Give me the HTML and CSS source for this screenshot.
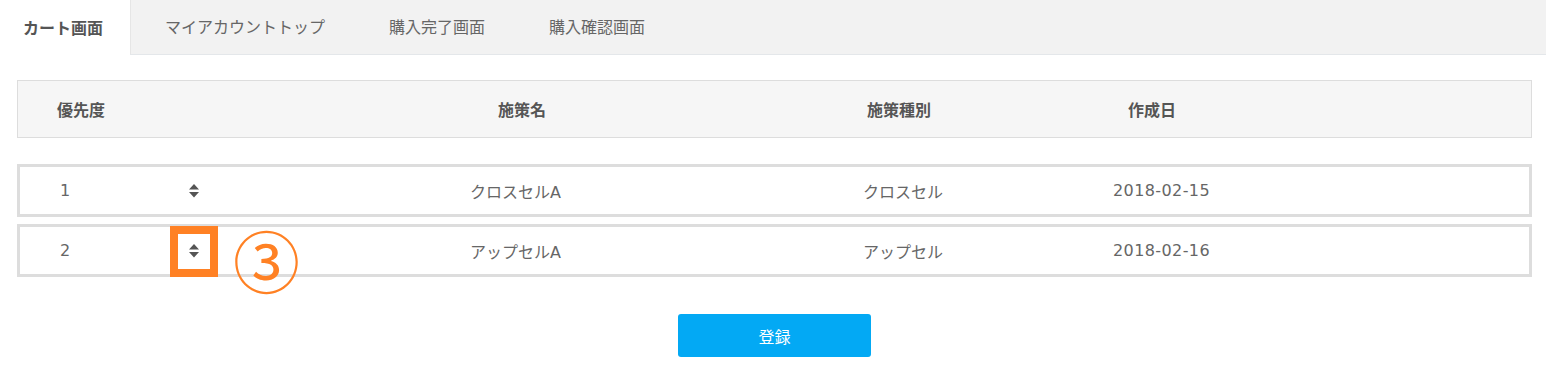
FILE: index.html
```html
<!DOCTYPE html>
<html lang="ja">
<head>
<meta charset="utf-8">
<title>カート画面</title>
<link rel="stylesheet" href="styles.css">
</head>
<body>
<nav class="tabs">
  <div class="tab active">カート画面</div>
  <div class="tab-rest">
    <div class="tab">マイアカウントトップ</div>
    <div class="tab">購入完了画面</div>
    <div class="tab">購入確認画面</div>
  </div>
</nav>
<main class="content">
  <div class="thead">
    <div>優先度</div>
    <div>施策名</div>
    <div>施策種別</div>
    <div>作成日</div>
  </div>
  <div class="rows">
    <div class="row">
      <div>1</div>
      <div class="sort"><svg width="10" height="14" viewBox="0 0 10 14"><path d="M5 0 L10 5.5 H0 Z M0 8 H10 L5 13.5 Z" fill="#555"/></svg></div>
      <div>クロスセルA</div>
      <div>クロスセル</div>
      <div class="date">2018-02-15</div>
    </div>
    <div class="row">
      <div>2</div>
      <div class="sort"><svg width="10" height="14" viewBox="0 0 10 14"><path d="M5 0 L10 5.5 H0 Z M0 8 H10 L5 13.5 Z" fill="#555"/></svg></div>
      <div>アップセルA</div>
      <div>アップセル</div>
      <div class="date">2018-02-16</div>
      <div class="mark-box"></div>
      <div class="mark-num">③</div>
    </div>
  </div>
  <div class="actions">
    <button class="btn">登録</button>
  </div>
</main>
</body>
</html>
```
FILE: styles.css
```css
body {
  margin: 0;
  font-family: "DejaVu Sans", "Noto Sans CJK JP", sans-serif;
  font-size: 16px;
  color: #666;
  background: #fff;
}
.tabs {
  display: flex;
  height: 54px;
  border-bottom: 1px solid #e4e7ea;
}
.tab {
  display: flex;
  align-items: center;
  padding: 0 32px 2px;
  font-family: "Noto Sans CJK JP", sans-serif;
  color: #666;
  white-space: nowrap;
}
.tab.active {
  width: 130px;
  box-sizing: border-box;
  padding: 0 0 2px 23px;
  font-weight: bold;
  color: #555;
  background: #fff;
  height: 55px;
}
.tab-rest {
  flex: 1;
  display: flex;
  background: #f2f2f2;
  border-left: 1px solid #e6e6e6;
  padding-left: 2px;
}
.content {
  padding: 25px 14px 0 17px;
}
.thead {
  display: grid;
  grid-template-columns: 441px 369px 261px 1fr;
  align-items: center;
  height: 58px;
  box-sizing: border-box;
  padding-left: 39px;
  background: #f6f6f6;
  border: 1px solid #dddddd;
  font-family: "Noto Sans CJK JP", sans-serif;
  font-weight: bold;
  color: #555;
}
.rows {
  margin-top: 26px;
  display: flex;
  flex-direction: column;
  gap: 7px;
}
.row {
  position: relative;
  display: grid;
  grid-template-columns: 129px 281px 393px 250px 1fr;
  align-items: center;
  height: 53px;
  box-sizing: border-box;
  padding-left: 40px;
  border: 3px solid #dddddd;
  color: #666;
}
.date {
  letter-spacing: 0.4px;
}
.sort {
  display: flex;
  align-items: center;
  padding-top: 1px;
}
.sort svg { display: block; }
.mark-box {
  position: absolute;
  left: 150px;
  top: -1px;
  width: 48px;
  height: 51px;
  box-sizing: border-box;
  border: 8px solid #ff8124;
}
.mark-num {
  position: absolute;
  left: 213px;
  top: -2px;
  font-family: "Noto Sans CJK JP", sans-serif;
  font-size: 67px;
  line-height: 1;
  color: #ff8124;
}
.actions {
  display: flex;
  justify-content: center;
  margin-top: 37px;
}
.btn {
  width: 193px;
  height: 43px;
  border: none;
  border-radius: 3px;
  background: #03a9f4;
  color: #fff;
  font-family: "Noto Sans CJK JP", sans-serif;
  font-size: 16px;
}
```
